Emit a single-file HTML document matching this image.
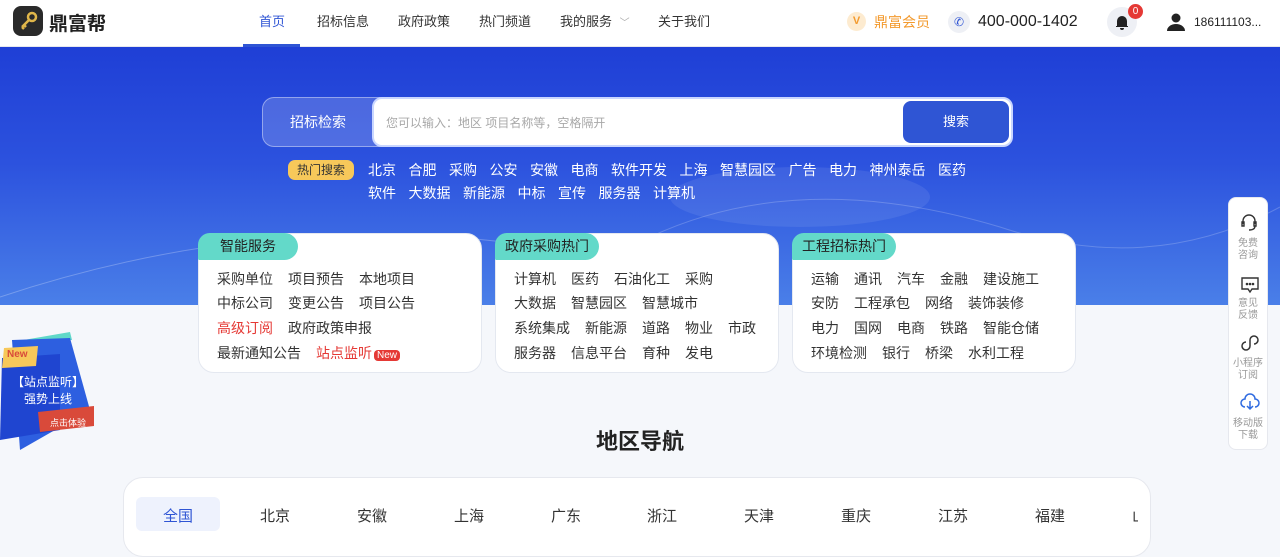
<!DOCTYPE html>
<html><head><meta charset="utf-8"><style>
*{margin:0;padding:0;box-sizing:border-box}
body{width:1280px;height:537px;overflow:hidden;background:#f5f7fb;font-family:"Liberation Sans","Noto Sans CJK SC",sans-serif;position:relative;color:#222}
.abs{position:absolute}
.hdr{left:0;top:0;width:1280px;height:47px;background:#fff;border-bottom:1px solid #e6e8ee}
.nav{top:0;height:47px;line-height:44px;font-size:13px;color:#333}
.hero{left:0;top:47px;width:1280px;height:258px;background:linear-gradient(180deg,#1f3fd6 0%,#2c52de 45%,#4a7fe8 100%);overflow:hidden}
.card{background:#fff;border-radius:16px;border:1px solid #e4e8f0;width:284px;height:140px;top:233px}
.tab{position:absolute;left:-1px;top:-1px;height:27px;background:#63d9c9;border-radius:14px 16px 16px 2px;font-size:14px;line-height:26px;color:#222;padding:0 22px}
.row{position:absolute;left:18px;display:flex;gap:15px;font-size:14px;color:#333;white-space:nowrap}
.hot{font-size:14px;color:#fff;display:flex;gap:12.5px;white-space:nowrap}
.reg{font-size:15px;color:#333;top:505px}
</style></head><body>
<div class="abs hdr"></div>
<div class="abs" style="left:13px;top:6px;width:30px;height:30px;background:#2a2a2a;border-radius:8px"></div>
<svg class="abs" style="left:17px;top:10px" width="22" height="22" viewBox="0 0 22 22"><circle cx="15" cy="7" r="4" fill="none" stroke="#e0b64a" stroke-width="2.5"/><path d="M12 10 L5 17 M7 15 l2 2 M5 17 l2 2" stroke="#e0b64a" stroke-width="2.5" fill="none"/></svg>
<div class="abs" style="left:49px;top:9px;font-size:19px;font-weight:bold;color:#222">鼎富帮</div>
<div class="abs nav" style="left:259px;color:#2f55d4">首页</div>
<div class="abs" style="left:243px;top:44px;width:57px;height:3px;background:#2f55d4"></div>
<div class="abs nav" style="left:317px">招标信息</div>
<div class="abs nav" style="left:398px">政府政策</div>
<div class="abs nav" style="left:479px">热门频道</div>
<div class="abs nav" style="left:560px">我的服务 <span style="color:#aaa;font-size:10px;margin-left:4px">﹀</span></div>
<div class="abs nav" style="left:658px">关于我们</div>
<div class="abs" style="left:847px;top:12px;width:19px;height:19px;border-radius:50%;background:#fdebd0;color:#f39a2e;font-size:11px;font-weight:bold;text-align:center;line-height:19px">V</div>
<div class="abs nav" style="left:874px;color:#f39a2e;font-size:14px">鼎富会员</div>
<div class="abs" style="left:948px;top:11px;width:22px;height:22px;border-radius:50%;background:#eef0f5;color:#2f55d4;font-size:12px;text-align:center;line-height:22px">✆</div>
<div class="abs nav" style="left:978px;font-size:16px;color:#222">400-000-1402</div>
<div class="abs" style="left:1107px;top:7px;width:30px;height:30px;border-radius:50%;background:#eef0f5"></div>
<svg class="abs" style="left:1113px;top:13px" width="18" height="18" viewBox="0 0 18 18"><path d="M4 13 V8 a5 5 0 0 1 10 0 V13 H15 V14 H3 V13Z M7 15 a2 2 0 0 0 4 0Z" fill="#222"/></svg>
<div class="abs" style="left:1128px;top:4px;width:15px;height:15px;border-radius:50%;background:#e53935;color:#fff;font-size:10px;text-align:center;line-height:15px">0</div>
<svg class="abs" style="left:1166px;top:12px" width="20" height="20" viewBox="0 0 20 20"><circle cx="10" cy="6" r="4.5" fill="#222"/><path d="M1 19 a9 7 0 0 1 18 0Z" fill="#222"/></svg>
<div class="abs nav" style="left:1194px;font-size:12px;color:#222">186111103...</div>

<div class="abs hero">
<svg width="1280" height="258" style="position:absolute;left:0;top:0"><path d="M0 250 Q300 150 600 210" stroke="rgba(255,255,255,.25)" fill="none"/><path d="M650 190 Q800 120 1000 180 Q1150 230 1280 160" stroke="rgba(255,255,255,.2)" fill="none"/><ellipse cx="800" cy="150" rx="130" ry="30" fill="rgba(255,255,255,.08)"/></svg>
</div>
<div class="abs" style="left:262px;top:97px;width:130px;height:50px;border-radius:12px;background:rgba(255,255,255,.18);border:1px solid rgba(255,255,255,.4);color:#fff;font-size:14px;line-height:48px;padding-left:27px">招标检索</div>
<div class="abs" style="left:372px;top:97px;width:641px;height:50px;border-radius:10px;background:#fff;border:2px solid #c9d6ff"></div>
<div class="abs" style="left:386px;top:114px;font-size:12px;color:#a8a8a8">您可以输入：地区 项目名称等，空格隔开</div>
<div class="abs" style="left:903px;top:101px;width:106px;height:42px;border-radius:8px;background:#2f55d4;color:#fff;font-size:13px;text-align:center;line-height:42px">搜索</div>
<div class="abs" style="left:288px;top:160px;width:66px;height:20px;border-radius:7px;background:#f7c85a;color:#333;font-size:12px;text-align:center;line-height:20px">热门搜索</div>
<div class="abs hot" style="left:368px;top:160px"><span>北京</span><span>合肥</span><span>采购</span><span>公安</span><span>安徽</span><span>电商</span><span>软件开发</span><span>上海</span><span>智慧园区</span><span>广告</span><span>电力</span><span>神州泰岳</span><span>医药</span></div>
<div class="abs hot" style="left:368px;top:183px"><span>软件</span><span>大数据</span><span>新能源</span><span>中标</span><span>宣传</span><span>服务器</span><span>计算机</span></div>

<div class="abs card" style="left:198px"><div class="tab">智能服务</div>
<div class="row" style="top:35px"><span>采购单位</span><span>项目预告</span><span>本地项目</span></div>
<div class="row" style="top:59px"><span>中标公司</span><span>变更公告</span><span>项目公告</span></div>
<div class="row" style="top:84px"><span style="color:#e53935">高级订阅</span><span>政府政策申报</span></div>
<div class="row" style="top:109px"><span>最新通知公告</span><span style="color:#e53935">站点监听<span style="background:#e53935;color:#fff;font-size:10px;border-radius:4px;padding:0 3px;margin-left:2px">New</span></span></div>
</div>
<div class="abs card" style="left:495px"><div class="tab" style="padding:0 10px">政府采购热门</div>
<div class="row" style="top:35px"><span>计算机</span><span>医药</span><span>石油化工</span><span>采购</span></div>
<div class="row" style="top:59px"><span>大数据</span><span>智慧园区</span><span>智慧城市</span></div>
<div class="row" style="top:84px"><span>系统集成</span><span>新能源</span><span>道路</span><span>物业</span><span>市政</span></div>
<div class="row" style="top:109px"><span>服务器</span><span>信息平台</span><span>育种</span><span>发电</span></div>
</div>
<div class="abs card" style="left:792px"><div class="tab" style="padding:0 10px">工程招标热门</div>
<div class="row" style="top:35px"><span>运输</span><span>通讯</span><span>汽车</span><span>金融</span><span>建设施工</span></div>
<div class="row" style="top:59px"><span>安防</span><span>工程承包</span><span>网络</span><span>装饰装修</span></div>
<div class="row" style="top:84px"><span>电力</span><span>国网</span><span>电商</span><span>铁路</span><span>智能仓储</span></div>
<div class="row" style="top:109px"><span>环境检测</span><span>银行</span><span>桥梁</span><span>水利工程</span></div>
</div>

<svg class="abs" style="left:0;top:330px" width="100" height="120" viewBox="0 0 100 120"><polygon points="12,12 70,2 72,10" fill="#5fd8c8"/><polygon points="12,10 70,8 90,80 20,120" fill="#2d5fe0"/><polygon points="2,28 60,24 60,100 0,110" fill="#1f45d0"/><polygon points="4,18 38,16 36,36 2,38" fill="#f7c85a"/><polygon points="38,82 94,76 94,96 40,102" fill="#d94a3a"/></svg>
<div class="abs" style="left:7px;top:349px;font-size:10px;font-weight:bold;color:#d94a3a">New</div>
<div class="abs" style="left:10px;top:374px;font-size:12px;color:#fff;text-align:center;line-height:17px;width:76px">【站点监听】<br>强势上线</div>
<div class="abs" style="left:50px;top:416px;font-size:9px;color:#fff">点击体验</div>

<div class="abs" style="left:1228px;top:197px;width:40px;height:253px;background:#fff;border-radius:8px;border:1px solid #e6e8ee"></div>
<svg class="abs" style="left:1239px;top:212px" width="20" height="20" viewBox="0 0 20 20" fill="none" stroke="#333" stroke-width="1.4"><path d="M4 12 V9 a6 6 0 0 1 12 0 V12 M3 10 h2 v4 h-2z M15 10 h2 v4 h-2z M16 14 q0 4 -6 4"/></svg>
<div class="abs" style="left:1228px;top:238px;width:40px;font-size:10px;color:#999;text-align:center;line-height:12px">免费<br>咨询</div>
<svg class="abs" style="left:1240px;top:275px" width="20" height="20" viewBox="0 0 20 20" fill="none" stroke="#333" stroke-width="1.4"><path d="M2 3 h16 v11 h-6 l-2 3 l-2 -3 h-6z"/><circle cx="7" cy="9" r=".6" fill="#333"/><circle cx="10" cy="9" r=".6" fill="#333"/><circle cx="13" cy="9" r=".6" fill="#333"/></svg>
<div class="abs" style="left:1228px;top:298px;width:40px;font-size:10px;color:#999;text-align:center;line-height:12px">意见<br>反馈</div>
<svg class="abs" style="left:1240px;top:333px" width="20" height="20" viewBox="0 0 20 20" fill="none" stroke="#333" stroke-width="1.5"><path d="M10 7 a4 4 0 1 1 4 4 M10 7 v6 a4 4 0 1 1 -4 -4"/></svg>
<div class="abs" style="left:1228px;top:358px;width:40px;font-size:10px;color:#999;text-align:center;line-height:12px">小程序<br>订阅</div>
<svg class="abs" style="left:1239px;top:393px" width="22" height="20" viewBox="0 0 22 20" fill="none" stroke="#2f6be0" stroke-width="1.5"><path d="M6 14 a4 4 0 0 1 0 -8 a5 5 0 0 1 10 0 a4 4 0 0 1 0 8 M11 8 v8 M8 13 l3 3 l3 -3"/></svg>
<div class="abs" style="left:1228px;top:418px;width:40px;font-size:10px;color:#999;text-align:center;line-height:12px">移动版<br>下载</div>

<div class="abs" style="left:0;top:424px;width:1280px;text-align:center;font-size:22px;font-weight:bold;color:#222">地区导航</div>
<div class="abs" style="left:123px;top:477px;width:1028px;height:80px;background:#fff;border-radius:20px;border:1px solid #e6e8ee"></div>
<div class="abs" style="left:136px;top:497px;width:84px;height:34px;border-radius:6px;background:#eef2fd"></div>
<div class="abs reg" style="left:163px;color:#2f55d4">全国</div>
<div class="abs reg" style="left:260px">北京</div>
<div class="abs reg" style="left:357px">安徽</div>
<div class="abs reg" style="left:454px">上海</div>
<div class="abs reg" style="left:551px">广东</div>
<div class="abs reg" style="left:647px">浙江</div>
<div class="abs reg" style="left:744px">天津</div>
<div class="abs reg" style="left:841px">重庆</div>
<div class="abs reg" style="left:938px">江苏</div>
<div class="abs reg" style="left:1035px">福建</div>
<div class="abs reg" style="left:1132px;width:6px;overflow:hidden">山</div>
</body></html>
